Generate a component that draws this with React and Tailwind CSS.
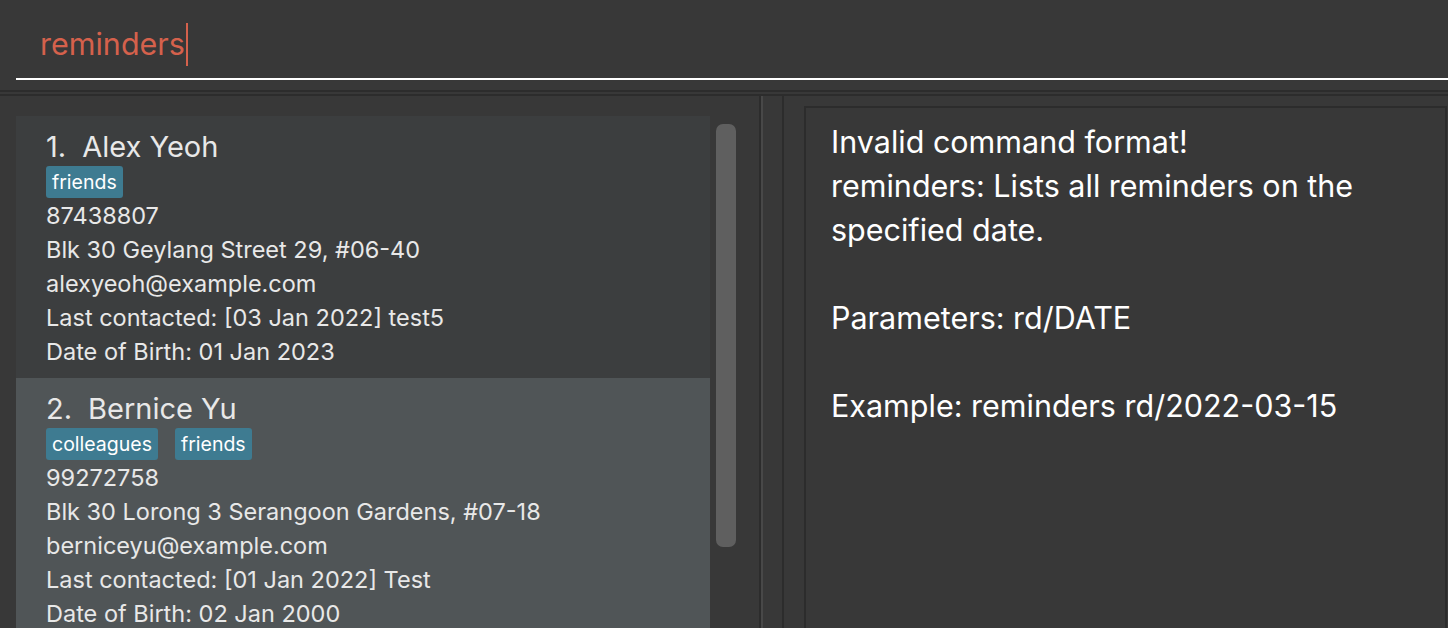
const PEOPLE = [
  {
    name: 'Alex Yeoh',
    tags: ['friends'],
    phone: '87438807',
    address: 'Blk 30 Geylang Street 29, #06-40',
    email: 'alexyeoh@example.com',
    contacted: 'Last contacted: [03 Jan 2022] test5',
    dob: 'Date of Birth: 01 Jan 2023',
  },
  {
    name: 'Bernice Yu',
    tags: ['colleagues', 'friends'],
    phone: '99272758',
    address: 'Blk 30 Lorong 3 Serangoon Gardens, #07-18',
    email: 'berniceyu@example.com',
    contacted: 'Last contacted: [01 Jan 2022] Test',
    dob: 'Date of Birth: 02 Jan 2000',
  },
]

function PersonCard({ index, person }) {
  const bg = index % 2 === 0 ? 'bg-[#3c3e3f]' : 'bg-[#505557]'
  return (
    <div className={`${bg} pl-[30px] pt-[13px] pb-[9px] text-[#e8e8e8]`}>
      <div className="text-[29px] leading-[36px] flex gap-[16px]">
        <span>{index + 1}.</span>
        <span>{person.name}</span>
      </div>
      <div className="flex gap-[17px] mt-[1px] mb-[1px]">
        {person.tags.map((t) => (
          <span key={t} className="bg-[#3e7b91] text-white text-[19.5px] leading-[32px] px-[6px] rounded-[3px]">
            {t}
          </span>
        ))}
      </div>
      <div className="text-[23.5px] leading-[34px]">
        <p>{person.phone}</p>
        <p>{person.address}</p>
        <p>{person.email}</p>
        <p>{person.contacted}</p>
        <p>{person.dob}</p>
      </div>
    </div>
  )
}

export default function App() {
  return (
    <div className="w-[1448px] h-[628px] bg-[#383838] overflow-hidden flex flex-col font-['Inter',sans-serif]">
      <div className="h-[92px] shrink-0 pl-[16px] border-b-2 border-[#2c2c2c]">
        <div className="h-[80px] border-b-2 border-white flex items-center pl-[24px] pt-[10px]">
          <span className="text-[#d5614c] text-[30.5px] leading-none">reminders</span>
          <span className="w-[2px] h-[43px] bg-[#d5614c] ml-[1px]" />
        </div>
      </div>
      <div className="mt-[2px] border-t-2 border-[#2c2c2c] flex flex-1 min-h-0">
        <div className="w-[761px] shrink-0 border-r-2 border-[#2c2c2c] flex pt-[20px] pl-[16px]">
          <div className="w-[694px] shrink-0">
            {PEOPLE.map((p, i) => (
              <PersonCard key={p.name} index={i} person={p} />
            ))}
          </div>
          <div className="ml-[6px] mt-[8px] w-[20px] h-[423px] bg-[#5f5f5f] rounded-[7px]" />
        </div>
        <div className="w-[2px] shrink-0 bg-[#484848]" />
        <div className="w-[19px] shrink-0" />
        <div className="flex-1 border-l-2 border-[#2c2c2c] pl-[20px] pt-[10px] pr-[1px]">
          <div className="h-full border-l-2 border-t-2 border-r-2 border-[#2c2c2c] pl-[25px] pt-[12px] text-white text-[30.5px] leading-[44px]">
            <p>Invalid command format!</p>
            <p>reminders: Lists all reminders on the</p>
            <p>specified date.</p>
            <p>&nbsp;</p>
            <p>Parameters: rd/DATE</p>
            <p>&nbsp;</p>
            <p>Example: reminders rd/2022-03-15</p>
          </div>
        </div>
      </div>
    </div>
  )
}
